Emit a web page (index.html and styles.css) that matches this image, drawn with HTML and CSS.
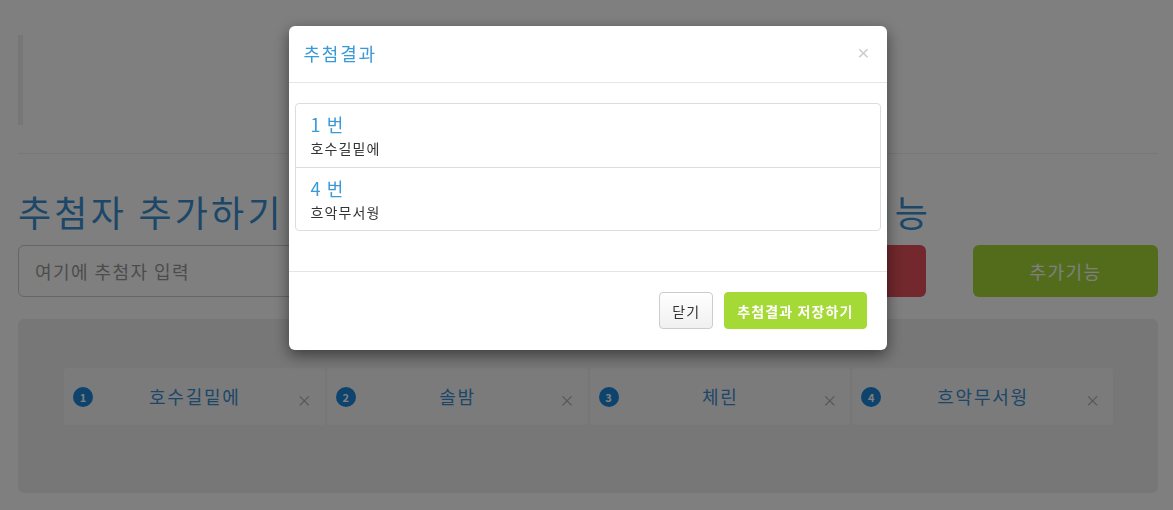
FILE: index.html
```html
<!DOCTYPE html>
<html>
<head>
  <meta charset="utf-8">
  <title>추첨 프로그램</title>
  <link rel="stylesheet" href="styles.css">
</head>
<body>
  <div class="container">
    <div class="notice"></div>
    <hr class="divider">

    <div class="add-row">
      <h1 class="title">추첨자 추가하기</h1>
      <h1 class="title title-right">랜덤 추첨 기능</h1>
      <input class="name-input" type="text" placeholder="여기에 추첨자 입력">
      <button class="btn-big btn-red">추첨하기</button>
      <button class="btn-big btn-green">추가기능</button>
    </div>

    <div class="entries">
      <div class="entry-list">
        <div class="entry"><span class="badge">1</span><span class="entry-name">호수길밑에</span><span class="entry-del">&times;</span></div>
        <div class="entry"><span class="badge">2</span><span class="entry-name">솔밤</span><span class="entry-del">&times;</span></div>
        <div class="entry"><span class="badge">3</span><span class="entry-name">체린</span><span class="entry-del">&times;</span></div>
        <div class="entry"><span class="badge">4</span><span class="entry-name">흐악무서웡</span><span class="entry-del">&times;</span></div>
      </div>
    </div>
  </div>

  <!-- 추첨결과 modal -->
  <div class="backdrop"></div>
  <div class="modal">
    <div class="modal-dialog">
      <div class="modal-header">
        <h4 class="modal-title">추첨결과</h4>
        <button class="close">&times;</button>
      </div>
      <div class="modal-body">
        <div class="result-list">
          <div class="result-item">
            <h4 class="result-num">1 번</h4>
            <p class="result-name">호수길밑에</p>
          </div>
          <div class="result-item">
            <h4 class="result-num">4 번</h4>
            <p class="result-name">흐악무서웡</p>
          </div>
        </div>
      </div>
      <div class="modal-footer">
        <button class="btn btn-default">닫기</button>
        <button class="btn btn-save">추첨결과 저장하기</button>
      </div>
    </div>
  </div>
</body>
</html>
```

FILE: styles.css
```css
body {
  margin: 0;
  background: #fff;
  color: #333;
  font-family: "Noto Sans CJK KR", "Noto Sans", sans-serif;
  font-size: 14px;
  line-height: 1.42857;
  letter-spacing: 0.08em;
}

.container {
  padding: 35px 15px 0 18px;
}

.notice {
  height: 90px;
  border-left: 5px solid #eee;
}

.divider {
  margin: 28px 0 0;
  border: 0;
  border-top: 1px solid #eee;
}

.add-row {
  display: grid;
  grid-template-columns: 1fr 186px 185px;
  column-gap: 47px;
  row-gap: 14px;
  margin-top: 37px;
}

.title {
  margin: 0;
  font-size: 36px;
  font-weight: 400;
  line-height: 40px;
  letter-spacing: 0.09em;
  color: #3a8fd0;
  grid-column: 1;
  grid-row: 1;
}

.title-right {
  grid-column: 1 / 3;
  text-align: right;
  margin-right: -5px;
}

.name-input {
  grid-column: 1;
  height: 52px;
  box-sizing: border-box;
  padding: 0 16px;
  border: 1px solid #ccc;
  border-radius: 6px;
  font-family: inherit;
  font-size: 18px;
  letter-spacing: 0.08em;
}

.name-input::placeholder {
  color: #999;
}

.btn-big {
  height: 52px;
  border: none;
  border-radius: 6px;
  color: #fff;
  font-family: inherit;
  font-size: 18px;
  letter-spacing: 0.08em;
}

.btn-red {
  background: #e5505a;
}

.btn-green {
  background: #a4d936;
}

.entries {
  margin-top: 22px;
  padding: 49px 45px 68px 46px;
  background: #eee;
  border-radius: 6px;
}

.entry-list {
  display: flex;
  gap: 2px;
}

.entry {
  flex: 1;
  height: 57px;
  display: flex;
  align-items: center;
  padding: 0 12px 0 9px;
  background: #f6f6f6;
  border-radius: 3px;
}

.badge {
  width: 20px;
  height: 20px;
  border-radius: 50%;
  background: #1a86d8;
  color: #fff;
  font-size: 11px;
  font-weight: 700;
  line-height: 20px;
  letter-spacing: 0;
  text-align: center;
}

.entry-name {
  flex: 1;
  text-align: center;
  font-size: 18px;
  letter-spacing: 0.1em;
  color: #3a8fd0;
}

.entry-del {
  font-size: 15px;
  color: #aaa;
  margin-top: 6px;
}

/* modal */
.backdrop {
  position: fixed;
  inset: 0;
  background: rgba(0, 0, 0, 0.5);
}

.modal {
  position: fixed;
  inset: 0;
}

.modal-dialog {
  width: 598px;
  margin: 26px auto 0;
  position: relative;
  left: 1px;
  background: #fff;
  border-radius: 6px;
  box-shadow: 0 5px 15px rgba(0, 0, 0, 0.5);
}

.modal-header {
  display: flex;
  justify-content: space-between;
  align-items: center;
  height: 56px;
  padding: 0 17px 0 15px;
  border-bottom: 1px solid #e5e5e5;
}

.modal-title {
  margin: 0;
  font-size: 18px;
  font-weight: 400;
  letter-spacing: 0.1em;
  color: #3a9ad9;
}

.close {
  padding: 0;
  border: none;
  background: none;
  font-size: 21px;
  color: #ccc;
  line-height: 1;
  margin-top: -3px;
}

.modal-body {
  padding: 20px 6px 40px;
}

.result-list {
  border: 1px solid #ddd;
  border-radius: 4px;
}

.result-item {
  height: 63px;
  box-sizing: border-box;
  padding: 9px 15px 0;
}

.result-item + .result-item {
  border-top: 1px solid #ddd;
}

.result-num {
  margin: 0 0 3px;
  font-size: 18px;
  font-weight: 400;
  line-height: 22px;
  color: #3a9ad9;
}

.result-name {
  margin: 0;
  font-size: 14px;
  line-height: 20px;
}

.modal-footer {
  display: flex;
  justify-content: flex-end;
  gap: 11px;
  padding: 20px 20px 21px;
  border-top: 1px solid #e5e5e5;
}

.btn {
  height: 37px;
  padding: 0 12px;
  border-radius: 4px;
  font-family: inherit;
  font-size: 14px;
  letter-spacing: 0.08em;
}

.btn-default {
  border: 1px solid #ccc;
  background: linear-gradient(#fff, #f0f0f0);
  color: #333;
}

.btn-save {
  border: 1px solid #a4d936;
  background: #a4d936;
  color: #fff;
  font-weight: 700;
}
```
